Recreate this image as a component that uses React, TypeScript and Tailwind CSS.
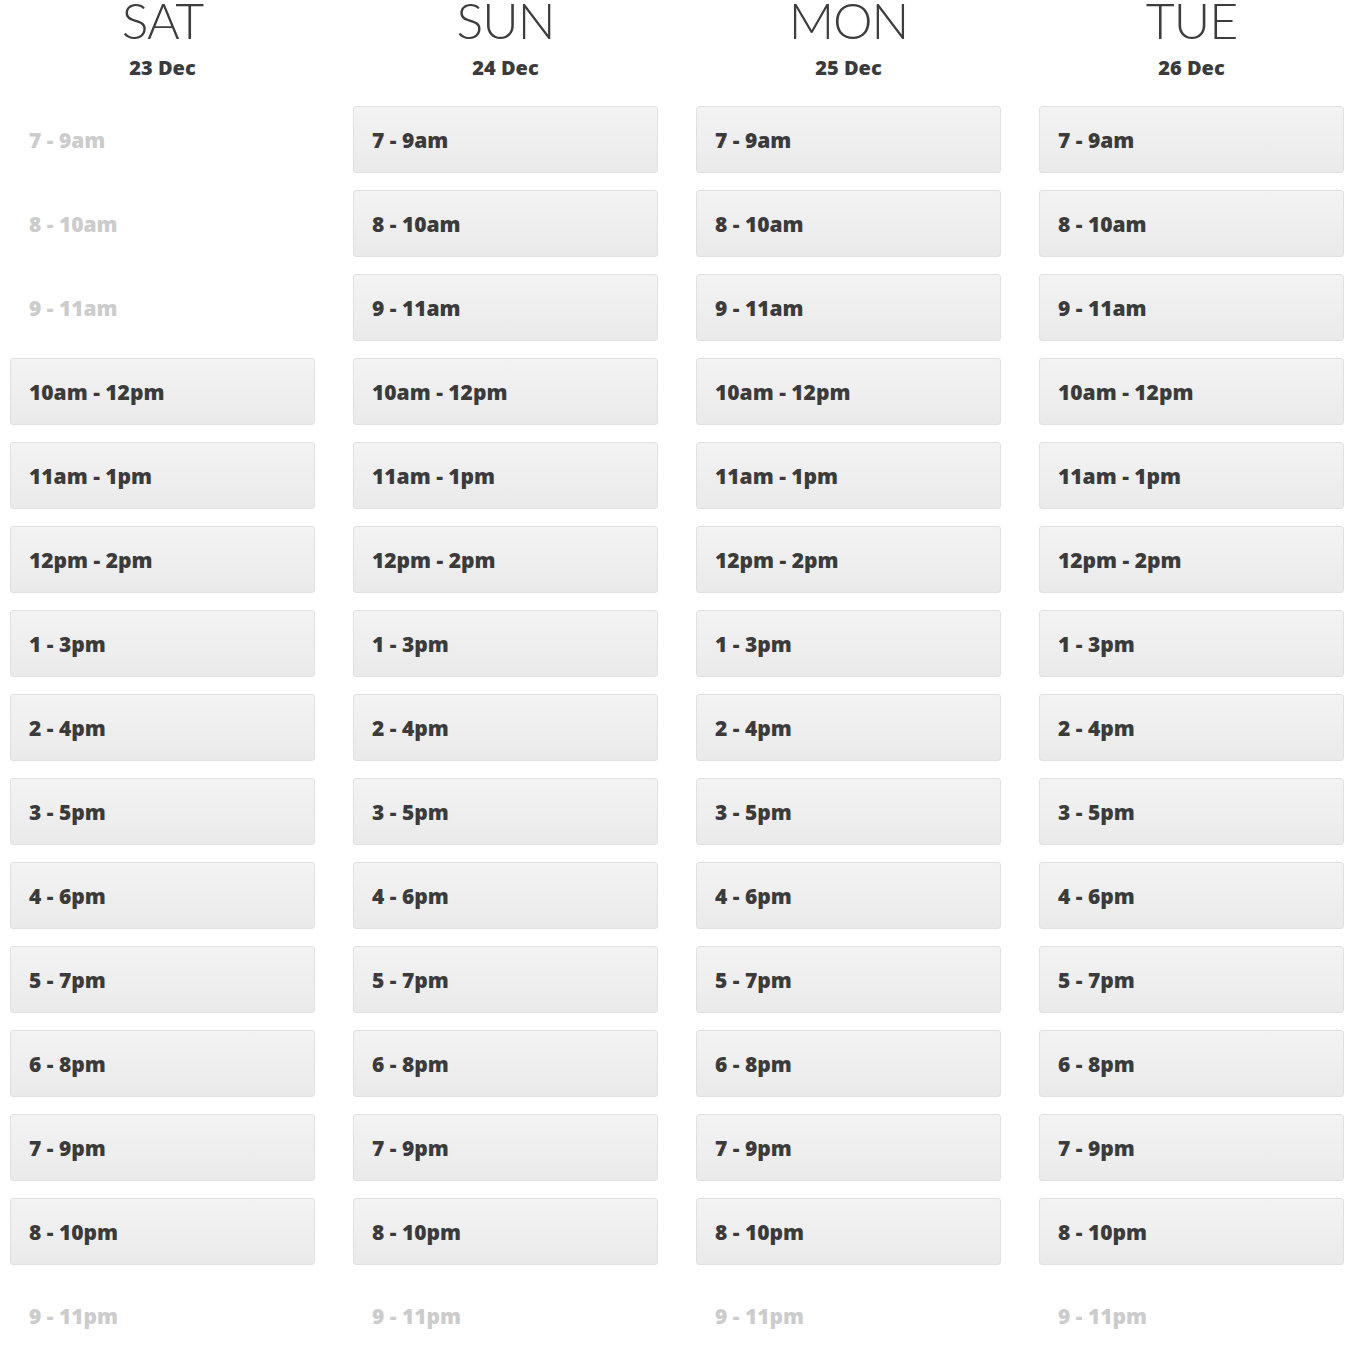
import React from "react";

type Day = { name: string; date: string; off: string[] };

const SLOTS = [
  "7 - 9am",
  "8 - 10am",
  "9 - 11am",
  "10am - 12pm",
  "11am - 1pm",
  "12pm - 2pm",
  "1 - 3pm",
  "2 - 4pm",
  "3 - 5pm",
  "4 - 6pm",
  "5 - 7pm",
  "6 - 8pm",
  "7 - 9pm",
  "8 - 10pm",
  "9 - 11pm",
];

const DAYS: Day[] = [
  { name: "SAT", date: "23 Dec", off: ["7 - 9am", "8 - 10am", "9 - 11am", "9 - 11pm"] },
  { name: "SUN", date: "24 Dec", off: ["9 - 11pm"] },
  { name: "MON", date: "25 Dec", off: ["9 - 11pm"] },
  { name: "TUE", date: "26 Dec", off: ["9 - 11pm"] },
];

function Slot({ label, disabled }: { label: string; disabled: boolean }) {
  if (disabled) {
    return (
      <div className="h-[67px] flex items-center pl-[19px] pt-[3px] text-[21px] font-extrabold text-[#cccccc]">
        {label}
      </div>
    );
  }
  return (
    <div className="h-[67px] flex items-center pl-[18px] pt-[3px] text-[21px] font-extrabold text-[#3b3b3b] bg-gradient-to-b from-[#f3f3f3] to-[#eaeaea] border border-[#e0e0e0] rounded-[3px]">
      {label}
    </div>
  );
}

export default function App() {
  return (
    <div className="bg-white w-full min-h-[1350px] overflow-hidden font-['Open_Sans','Liberation_Sans',sans-serif]">
      <div className="grid grid-cols-4 gap-x-[38px] px-[10px]">
        {DAYS.map((day) => (
          <div key={day.name} className="flex flex-col">
            <div className="h-[106px] flex flex-col items-center">
              <div className="font-['Lato','Liberation_Sans',sans-serif] text-[50px] font-light leading-none text-[#3d3d3d] -mt-[5px] tracking-[-1px]">
                {day.name}
              </div>
              <div className="text-[20px] font-extrabold leading-none text-[#3b3b3b] mt-[13px]">
                {day.date}
              </div>
            </div>
            <div className="flex flex-col gap-[17px]">
              {SLOTS.map((s) => (
                <Slot key={s} label={s} disabled={day.off.includes(s)} />
              ))}
            </div>
          </div>
        ))}
      </div>
    </div>
  );
}
